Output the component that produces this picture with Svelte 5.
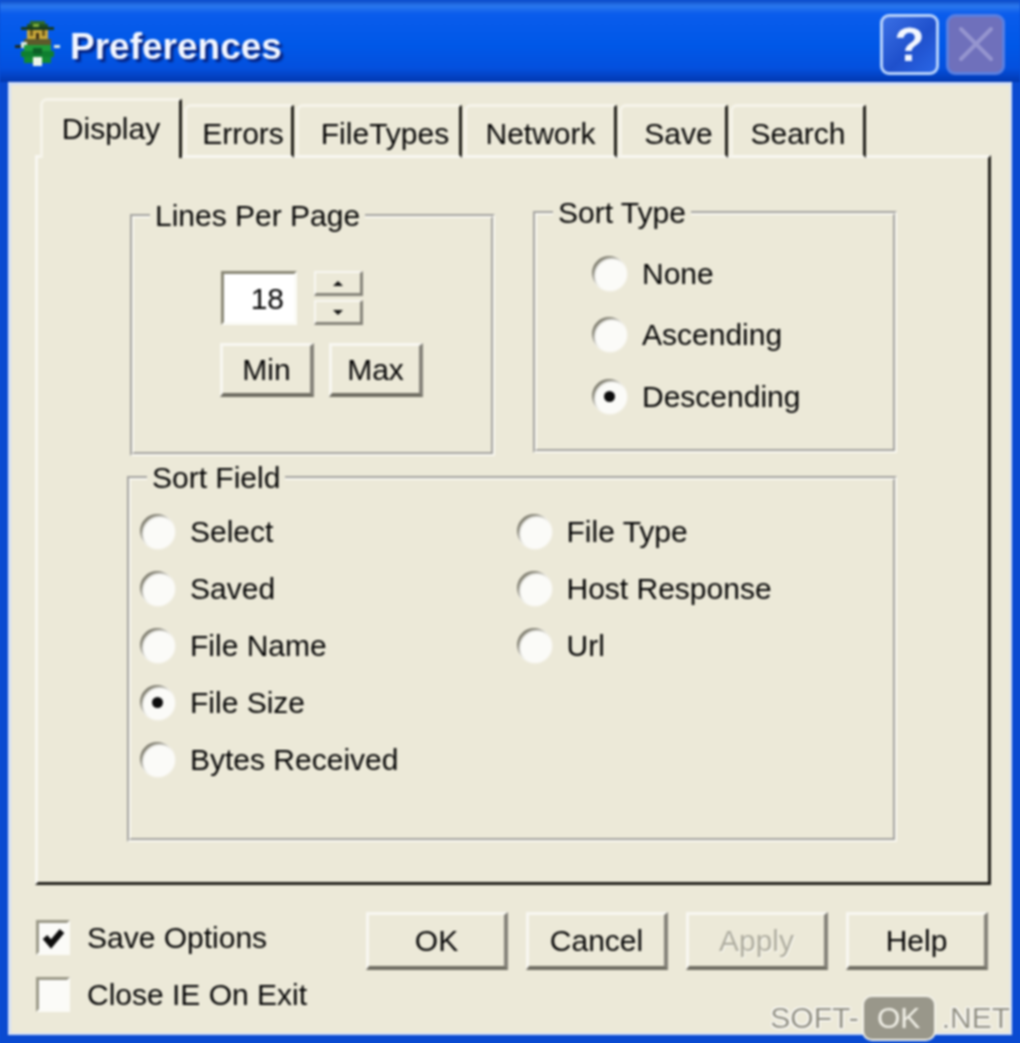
<script lang="ts">
  const tabs = [
    { label: 'Display', w: 142, pad: 0 },
    { label: 'Errors', w: 110, pad: 8 },
    { label: 'FileTypes', w: 166, pad: 12 },
    { label: 'Network', w: 153, pad: 0 },
    { label: 'Save', w: 109, pad: 10 },
    { label: 'Search', w: 136, pad: 0 }
  ];
  const sortTypes = [
    { label: 'None', on: false },
    { label: 'Ascending', on: false },
    { label: 'Descending', on: true }
  ];
  const fieldsLeft = [
    { label: 'Select', on: false },
    { label: 'Saved', on: false },
    { label: 'File Name', on: false },
    { label: 'File Size', on: true },
    { label: 'Bytes Received', on: false }
  ];
  const fieldsRight = ['File Type', 'Host Response', 'Url'];
  // petit bonhomme de l'icône, grille 15x15 : [x, y, w, h, couleur]
  const pixels = [
    [5, 0, 5, 1, '#2f6b2a'], [4, 1, 7, 1, '#1f4f22'], [6, 1, 2, 1, '#7fae3c'],
    [2, 2, 11, 1, '#173a1c'], [4, 3, 7, 3, '#c9a83a'], [5, 3, 1, 2, '#6b5a1e'],
    [9, 3, 1, 2, '#6b5a1e'], [7, 4, 1, 3, '#3c2f16'], [3, 6, 9, 2, '#5d5a2b'],
    [0, 8, 2, 1, '#1c2a22'], [13, 8, 2, 1, '#dfe9e4'], [2, 7, 2, 2, '#dfe9e4'],
    [3, 8, 9, 4, '#1f9a3a'], [2, 10, 11, 2, '#0f7f30'], [3, 12, 9, 2, '#128a34'],
    [6, 12, 3, 3, '#eef6e8'], [6, 9, 3, 2, '#0b5f26']
  ];
</script>

{#snippet radio(label: string, on: boolean)}
  <div class="option">
    <span class="radio" class:on></span>
    <span>{label}</span>
  </div>
{/snippet}

<div class="window">
  <header class="titlebar">
    <svg class="appicon" viewBox="0 0 15 15" width="45" height="45" shape-rendering="crispEdges">
      {#each pixels as p}
        <rect x={p[0]} y={p[1]} width={p[2]} height={p[3]} fill={p[4]} />
      {/each}
    </svg>
    <h1>Preferences</h1>
    <button class="capbtn help">?</button>
    <button class="capbtn close" aria-label="Close">
      <svg viewBox="0 0 40 40" width="40" height="40">
        <path d="M5 5 L35 35 M35 5 L5 35" stroke="#9595cf" stroke-width="4" stroke-linecap="round" />
      </svg>
    </button>
  </header>

  <div class="client">
    <div class="tabs">
      {#each tabs as t, i}
        <div class="tab" class:active={i === 0} style="width: {t.w}px; padding-left: {t.pad}px">{t.label}</div>
      {/each}
    </div>

    <section class="panel">
      <div class="top">
        <fieldset class="lines">
          <legend>Lines Per Page</legend>
          <div class="spin">
            <div class="input">18</div>
            <div class="arrows">
              <div class="arrow"><i class="up"></i></div>
              <div class="arrow"><i class="down"></i></div>
            </div>
          </div>
          <div class="minmax">
            <div class="btn small">Min</div>
            <div class="btn small">Max</div>
          </div>
        </fieldset>

        <fieldset class="sorttype">
          <legend>Sort Type</legend>
          <div class="stack">
            {#each sortTypes as o}
              {@render radio(o.label, o.on)}
            {/each}
          </div>
        </fieldset>
      </div>

      <fieldset class="sortfield">
        <legend>Sort Field</legend>
        <div class="cols">
          <div class="col">
            {#each fieldsLeft as o}
              {@render radio(o.label, o.on)}
            {/each}
          </div>
          <div class="col">
            {#each fieldsRight as label}
              {@render radio(label, false)}
            {/each}
          </div>
        </div>
      </fieldset>
    </section>

    <footer class="bottom">
      <div class="checks">
        <div class="check">
          <span class="box">
            <svg viewBox="0 0 28 28" width="28" height="28">
              <path d="M6 13 L12 20 L23 7" fill="none" stroke="#0c0c0c" stroke-width="6" />
            </svg>
          </span>
          Save Options
        </div>
        <div class="check"><span class="box"></span>Close IE On Exit</div>
      </div>
      <div class="actions">
        <div class="btn">OK</div>
        <div class="btn">Cancel</div>
        <div class="btn disabled">Apply</div>
        <div class="btn">Help</div>
      </div>
    </footer>
  </div>

  <div class="mark">SOFT-<span class="pill">OK</span>.NET</div>
</div>

<style>
  :global(body) { background: #0a4fd6; overflow: hidden; }
  .window {
    position: relative; width: 1020px; height: 1043px;
    display: flex; flex-direction: column; overflow: hidden;
    font-family: "Liberation Sans", Arial, sans-serif; font-size: 30px; color: #050505;
    background: #0a4ad0; filter: blur(0.8px);
  }
  .titlebar {
    height: 82px; flex-shrink: 0; display: flex; align-items: center;
    padding: 6px 15px 0 15px; box-sizing: border-box;
    background: linear-gradient(#0b48c4 0, #2a78ee 6px, #0a5cec 14px, #0058e8 45px, #0450de 68px, #0238b0 82px);
  }
  .appicon { margin-top: -2px; flex-shrink: 0; }
  h1 {
    margin: 6px 0 0 10px; flex: 1; font-size: 37px; font-weight: 700; color: #f2f6ff;
    text-shadow: 3px 3px 2px #07227e;
  }
  .capbtn {
    width: 59px; height: 61px; padding: 0; border-radius: 9px; margin-left: 7px;
    display: flex; align-items: center; justify-content: center;
    font-family: "Liberation Sans", Arial, sans-serif;
  }
  .help {
    border: 3px solid #b9d3fb; color: #f4f8ff; font-size: 49px; font-weight: 700;
    background: linear-gradient(135deg, #3a6fe4, #1f50cc 55%, #2a66e6);
  }
  .close { border: 3px solid #5a7fe0; background: #6f70bb; }
  .client {
    flex: 1; margin: 0 8px 8px; padding: 16px 19px 0 24px; position: relative;
    background: #ece9d8; border-left: 3px solid #d3e0f8; border-top: 3px solid #d3e0f8;
    border-right: 2px solid #d3e0f8; border-bottom: 2px solid #d3e0f8;
    box-sizing: border-box; display: flex; flex-direction: column;
  }
  .tabs {
    display: flex; align-items: flex-end; gap: 2px; height: 60px; margin: -3px 0 -3px 5px;
    position: relative; z-index: 1;
  }
  .tab {
    height: 54px; box-sizing: border-box; line-height: 54px; text-align: center;
    flex-shrink: 0; background: #ece9d8;
    border-top: 3px solid #f6f4ea; border-left: 3px solid #f6f4ea;
    border-right: 3px solid #201f1a; border-radius: 7px 3px 0 0;
  }
  .tab:not(.active) { border-bottom: 3px solid #f8f7f1; }
  .tab.active { height: 60px; line-height: 55px; }
  .panel {
    height: 730px; box-sizing: border-box; padding: 37px 91px 0 89px;
    border: 3px solid #f8f7f1; border-right-color: #201f1a; border-bottom-color: #201f1a;
    display: flex; flex-direction: column;
  }
  fieldset {
    margin: 0; padding: 0; min-width: 0; box-sizing: border-box;
    border: 4px groove #f8f7f0;
  }
  legend { padding: 0 5px; margin-left: 16px; line-height: 36px; }
  .top { display: flex; gap: 38px; align-items: flex-start; }
  .lines { width: 365px; height: 258px; margin: 3px 0 0 3px; }
  .sorttype { width: 364px; height: 258px; }
  .stack { padding: 12px 0 0 55px; }
  .spin { display: flex; gap: 17px; margin: 37px 0 0 87px; }
  .input {
    width: 76px; height: 54px; box-sizing: border-box; background: #fff; text-align: right;
    padding-right: 10px; line-height: 50px;
    border: 3px solid #fbfbf6; border-top-color: #8a8877; border-left-color: #8a8877;
  }
  .arrows { display: flex; flex-direction: column; gap: 4px; }
  .arrow {
    width: 49px; height: 25px; box-sizing: border-box; display: flex;
    align-items: center; justify-content: center;
    border: 2px solid #f8f7f1; border-right: 3px solid #86847a; border-bottom: 3px solid #86847a;
  }
  .arrow i { width: 0; height: 0; border: 5px solid transparent; }
  .arrow i.up { border-top: 0; border-bottom: 5px solid #111; }
  .arrow i.down { border-bottom: 0; border-top: 5px solid #111; }
  .minmax { display: flex; gap: 15px; margin: 18px 0 0 86px; }
  .btn {
    width: 142px; height: 58px; box-sizing: border-box; text-align: center; line-height: 52px;
    background: #ece9d8;
    border: 3px solid #f8f7f1; border-right: 4px solid #85837a; border-bottom: 4px solid #6f6d62;
  }
  .btn.small { width: 94px; height: 54px; line-height: 48px; }
  .btn.disabled { color: #aeac9e; text-shadow: 1px 1px 0 #fbfbf5; }
  .option { display: flex; align-items: center; gap: 16px; height: 56.8px; }
  .sorttype .option { height: 61.5px; }
  .radio {
    position: relative; width: 34px; height: 34px; border-radius: 50%; flex-shrink: 0; top: -1px;
    background: #fbfbf8; box-shadow: inset 3px 3px 2px -1px #7f7d6e, 1px 1px 2px #fff;
  }
  .radio.on::after {
    content: ''; position: absolute; left: 12px; top: 12px; width: 11px; height: 11px;
    border-radius: 50%; background: #0c0c0c;
  }
  .sortfield { height: 382px; margin-top: 4px; }
  .cols { display: flex; padding: 8px 0 0 9px; }
  .col { width: 377px; }
  .bottom { display: flex; justify-content: space-between; margin-top: 27px; }
  .checks { display: flex; flex-direction: column; gap: 22px; margin: 8px 0 0 1px; }
  .check { display: flex; align-items: center; gap: 17px; height: 35px; }
  .box {
    width: 34px; height: 35px; box-sizing: border-box; background: #fbfbf8; flex-shrink: 0;
    display: flex; align-items: center; justify-content: center;
    border: 3px solid #fbfbf6; border-top-color: #9b9988; border-left-color: #9b9988;
  }
  .actions { display: flex; gap: 18px; margin-right: 3px; }
  .mark {
    position: absolute; right: 10px; bottom: 2px; display: flex; align-items: center;
    height: 46px; font-size: 30px; color: #918f81;
    text-shadow: 0 0 2px #fff, 1px 1px 1px #fff, -1px -1px 1px #fff, 1px -1px 1px #fff, -1px 1px 1px #fff;
  }
  .pill {
    width: 74px; height: 46px; box-sizing: border-box; margin: 0 6px 0 3px;
    display: flex; align-items: center; justify-content: center;
    background: #99978a; color: #f2f1e8; border-radius: 10px; text-shadow: none;
    border: 2px solid #f2f1e8;
  }
</style>
